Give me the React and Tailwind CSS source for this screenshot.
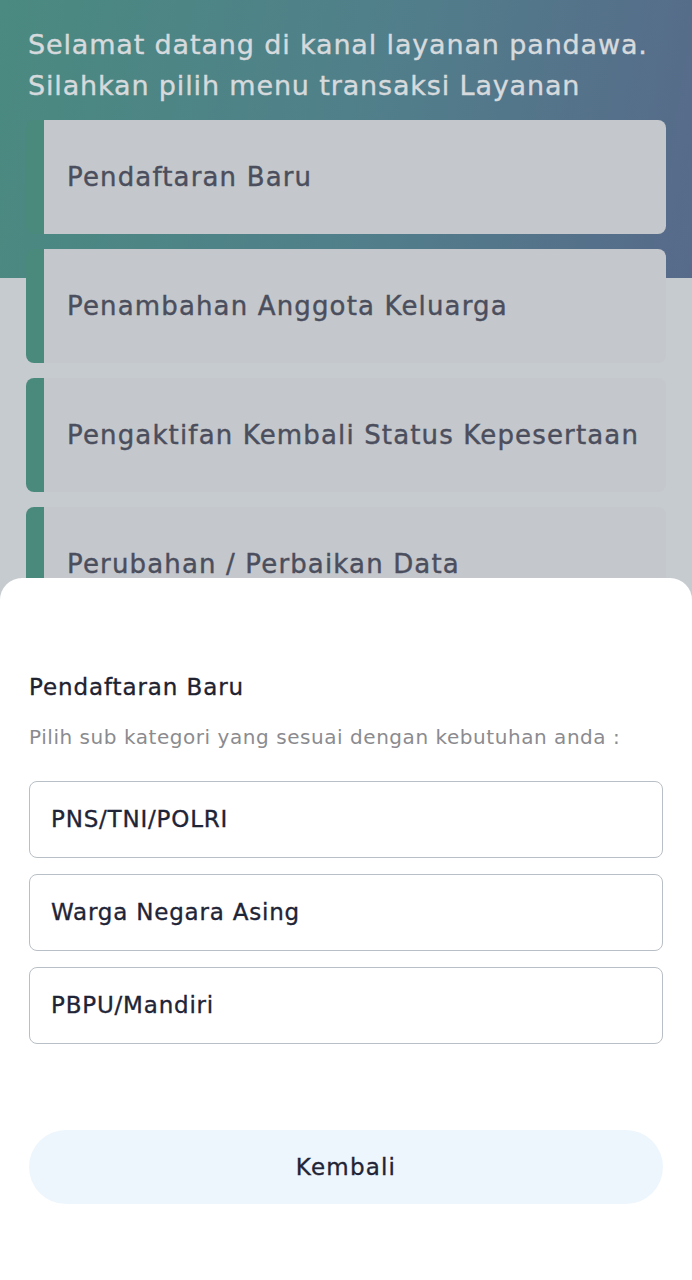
export default function App() {
  const menus = [
    "Pendaftaran Baru",
    "Penambahan Anggota Keluarga",
    "Pengaktifan Kembali Status Kepesertaan",
    "Perubahan / Perbaikan Data",
  ];
  const subs = ["PNS/TNI/POLRI", "Warga Negara Asing", "PBPU/Mandiri"];
  return (
    <div
      className="relative h-[1280px] w-[692px] overflow-hidden bg-[#c6cbd0] bg-[linear-gradient(100deg,#4a8a80_0%,#50808a_50%,#576a8a_100%)] bg-no-repeat bg-[length:100%_278px]"
      style={{ fontFamily: '"DejaVu Sans", "Noto Sans", sans-serif' }}
    >
      <div className="flex flex-col px-[26px] pt-[24px]">
        <h1 className="pl-[2px] text-[27px] font-normal leading-[41px] tracking-[0.85px] text-[#d6dadd] [-webkit-text-stroke:0.4px_#d6dadd]">
          Selamat datang di kanal layanan pandawa.
          <br />
          Silahkan pilih menu transaksi Layanan
        </h1>
        <div className="mt-[14px] flex flex-col gap-[15px]">
          {menus.map((m) => (
            <div
              key={m}
              className="flex h-[114px] shrink-0 items-center rounded-lg border-l-[18px] border-[#4a8a7c] bg-[#c4c7cb] pl-[23px]"
            >
              <span className="text-[26px] font-normal tracking-[1.15px] text-[#4b4e5d] [-webkit-text-stroke:0.4px_#4b4e5d]">
                {m}
              </span>
            </div>
          ))}
        </div>
      </div>

      <div className="absolute inset-x-0 bottom-0 top-[578px] flex flex-col rounded-t-[22px] bg-white px-[29px] pt-[94px]">
        <h2 className="text-[23px] font-normal leading-[30px] tracking-[0.9px] text-[#1f2230] [-webkit-text-stroke:0.35px_#1f2230]">
          Pendaftaran Baru
        </h2>
        <p className="mt-[21px] text-[20px] font-normal leading-[28px] tracking-[0.55px] text-[#8b8b8f]">
          Pilih sub kategori yang sesuai dengan kebutuhan anda :
        </p>
        <div className="mt-[30px] flex flex-col gap-[16px]">
          {subs.map((s) => (
            <div
              key={s}
              className="flex h-[77px] items-center rounded-lg border border-[#b9bfc6] px-[21px]"
            >
              <span className="text-[23px] font-normal tracking-[0.8px] text-[#1f2437] [-webkit-text-stroke:0.35px_#1f2437]">
                {s}
              </span>
            </div>
          ))}
        </div>
        <button className="mt-[86px] flex h-[74px] items-center justify-center rounded-full bg-[#eef6fd] text-[23px] font-normal tracking-[1.2px] text-[#1f2437] [-webkit-text-stroke:0.35px_#1f2437]">
          Kembali
        </button>
      </div>
    </div>
  );
}
